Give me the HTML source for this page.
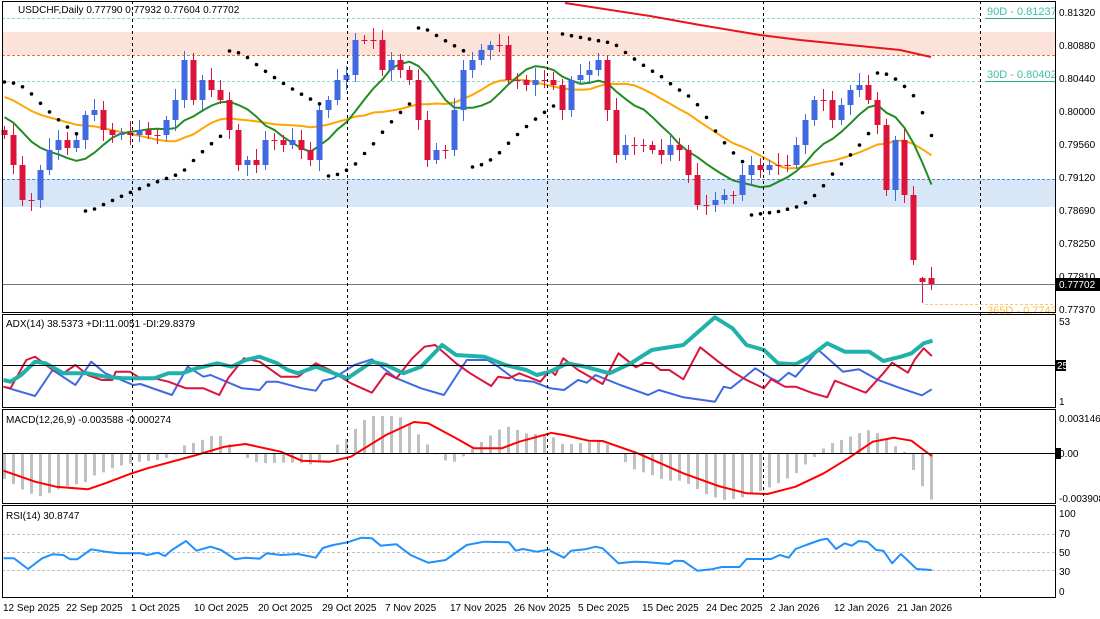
<!DOCTYPE html>
<html><head><meta charset="utf-8"><style>
body{margin:0;width:1100px;height:619px;background:#fff;overflow:hidden;font-family:"Liberation Sans",sans-serif}
svg{position:absolute;left:0;top:0}
text{font-family:"Liberation Sans",sans-serif;font-size:10px;fill:#000}
</style></head><body>
<svg id="s" width="1100" height="619" xmlns="http://www.w3.org/2000/svg">
<rect x="2" y="32" width="1053" height="23" fill="#fbe3d9"/>
<line x1="2" y1="55.5" x2="1055" y2="55.5" stroke="#e8743b" stroke-dasharray="3,2"/>
<rect x="2" y="179" width="1053" height="28" fill="#d8e7f8"/>
<line x1="2" y1="179.5" x2="1055" y2="179.5" stroke="#4a8ad8" stroke-dasharray="3,2"/>
<line x1="2" y1="18.5" x2="980" y2="18.5" stroke="#8fd6c6" stroke-dasharray="3,2"/>
<line x1="985" y1="18.5" x2="1055" y2="18.5" stroke="#2aa88a"/>
<line x1="2" y1="81.5" x2="980" y2="81.5" stroke="#8fd6c6" stroke-dasharray="3,2"/>
<line x1="985" y1="81.5" x2="1055" y2="81.5" stroke="#2aa88a"/>
<line x1="925" y1="304.5" x2="1055" y2="304.5" stroke="#ffc96b" stroke-dasharray="3,2"/>
<line x1="2" y1="284.5" x2="1055" y2="284.5" stroke="#6a7a8a"/>
<text x="987" y="15" style="fill:#3dbfa5;font-size:11px">90D - 0.81237</text>
<text x="987" y="78" style="fill:#3dbfa5;font-size:11px">30D - 0.80402</text>
<text x="987" y="314" style="fill:#ffc14d;font-size:11px">365D - 0.7743</text>
<g id="g"></g>
<g id="frame" fill="none" stroke="#000">
<rect x="2.5" y="1.5" width="1053" height="311"/>
<rect x="2.5" y="314.5" width="1053" height="93"/>
<rect x="2.5" y="409.5" width="1053" height="94"/>
<rect x="2.5" y="505.5" width="1053" height="92"/>
</g>
<g stroke="#000" stroke-dasharray="3,3">
<line x1="132.5" y1="1" x2="132.5" y2="598"/><line x1="347.5" y1="1" x2="347.5" y2="598"/><line x1="547.5" y1="1" x2="547.5" y2="598"/><line x1="763.5" y1="1" x2="763.5" y2="598"/><line x1="980.5" y1="1" x2="980.5" y2="598"/>
</g>
<line x1="2" y1="365.5" x2="1055" y2="365.5" stroke="#000"/>
<line x1="2" y1="453.5" x2="1055" y2="453.5" stroke="#000"/>
<text x="18" y="13">USDCHF,Daily  0.77790 0.77932 0.77604 0.77702</text>
<text x="6" y="327">ADX(14) 38.5373 +DI:11.0051 -DI:29.8379</text>
<text x="6" y="423">MACD(12,26,9) -0.003588 -0.000274</text>
<text x="6" y="519">RSI(14) 30.8747</text>
<g>
<text x="1059" y="16">0.81320</text><text x="1059" y="49">0.80880</text><text x="1059" y="82">0.80440</text><text x="1059" y="115">0.80000</text><text x="1059" y="148">0.79560</text><text x="1059" y="181">0.79120</text><text x="1059" y="214">0.78690</text><text x="1059" y="247">0.78250</text><text x="1059" y="280">0.77810</text><text x="1059" y="313">0.77370</text>
<rect x="1056" y="278" width="44" height="13" fill="#000"/><text x="1059" y="288" style="fill:#fff">0.77702</text>
<text x="1059" y="325">53</text><rect x="1056" y="360" width="10" height="11" fill="#000"/><text x="1057" y="369" style="fill:#fff">25</text><text x="1059" y="405">1</text>
<text x="1059" y="422">0.003146</text><rect x="1056" y="448" width="5" height="11" fill="#000"/><text x="1059" y="457">0.00</text><text x="1059" y="502">-0.003908</text>
<text x="1059" y="517">100</text><text x="1059" y="537">70</text><text x="1059" y="556">50</text><text x="1059" y="575">30</text><text x="1059" y="595">0</text>
</g>
<g>
<text x="3" y="611">12 Sep 2025</text><text x="66" y="611">22 Sep 2025</text><text x="131" y="611">1 Oct 2025</text><text x="194" y="611">10 Oct 2025</text><text x="258" y="611">20 Oct 2025</text><text x="322" y="611">29 Oct 2025</text><text x="385" y="611">7 Nov 2025</text><text x="450" y="611">17 Nov 2025</text><text x="514" y="611">26 Nov 2025</text><text x="578" y="611">5 Dec 2025</text><text x="642" y="611">15 Dec 2025</text><text x="706" y="611">24 Dec 2025</text><text x="770" y="611">2 Jan 2026</text><text x="834" y="611">12 Jan 2026</text><text x="897" y="611">21 Jan 2026</text>
</g>
</svg>
<script>
(function(){
var NS="http://www.w3.org/2000/svg",G=document.getElementById('g');
function el(t,a){var e=document.createElementNS(NS,t);for(var k in a)e.setAttribute(k,a[k]);G.appendChild(e);return e;}
function pl(pts,c,w,ox){var s=pts.map(function(p){return (ox+p[0]/2.85).toFixed(1)+','+(310+p[1]/3).toFixed(1)}).join(' ');el('polyline',{points:s,fill:'none',stroke:c,'stroke-width':w,'stroke-linejoin':'round'});}
var C=[135,165,200,200,170,150,140,148,140,115,110,130,135,133,135,130,135,135,120,100,60,100,80,90,100,130,165,160,165,140,140,145,140,150,160,110,100,80,75,40,40,40,70,60,70,80,120,160,150,150,110,70,60,50,45,45,80,80,85,80,80,85,110,80,75,70,60,110,155,145,145,145,150,155,145,150,175,205,205,200,195,195,175,165,170,165,165,165,145,120,100,100,120,105,90,85,100,125,190,140,195,260,282,284];
var N=C.length,X=function(i){return 4.5+i*9;};
el('polyline',{points:'565,3 650,16 700,25 760,35 800,40 850,45 900,50 931,57',fill:'none',stroke:'#e8141e','stroke-width':2});
function ma(p,seed){var h=[];for(var k=0;k<p;k++)h.push(seed);var r=[];for(var i=0;i<N;i++){h.push(C[i]);h.shift();r.push(h.reduce(function(a,b){return a+b})/p);}return r;}
var o=ma(20,95),g=ma(9,115);
el('polyline',{points:o.map(function(v,i){return X(i)+','+v.toFixed(1)}).join(' '),fill:'none',stroke:'#ffa500','stroke-width':2});
el('polyline',{points:g.map(function(v,i){return X(i)+','+v.toFixed(1)}).join(' '),fill:'none',stroke:'#228b22','stroke-width':2});
var H=[],L=[];
for(var i=0;i<N;i++){var op=i?C[i-1]:130,cl=C[i];var tp=Math.min(op,cl),bt=Math.max(op,cl);
 var hi=tp-4-((i*7)%9),lo=bt+4+((i*5)%8);if(i==N-1){hi=267;lo=290;op=278;}
 if(i==N-2){op=278;hi=277;lo=303;}
 H.push(hi);L.push(lo);
 var up=cl<op,col=up?'#4169e1':'#dc143c';
 el('line',{x1:X(i),y1:hi,x2:X(i),y2:lo,stroke:col,'stroke-width':1});
 el('rect',{x:X(i)-3,y:Math.min(op,cl),width:6,height:Math.max(1,Math.abs(cl-op)),fill:col});}
var dn=true,ep=L[0],sar=82,af=0.02;
for(var i=0;i<N;i++){
 el('circle',{cx:X(i),cy:sar.toFixed(1),r:1.8,fill:'#000'});
 if(dn){ if(L[i]>ep){ep=L[i];af=Math.min(0.2,af+0.02);} sar=sar+af*(ep-sar); if(i+1<N&&H[i+1]<sar){dn=false;sar=ep;ep=H[i+1];af=0.02;} }
 else { if(H[i]<ep){ep=H[i];af=Math.min(0.2,af+0.02);} sar=sar+af*(ep-sar); if(i+1<N&&L[i+1]>sar){dn=true;sar=ep;ep=L[i+1];af=0.02;} }
}
var hk=[[10,505],[80,548],[120,560],[150,545],[200,525],[240,520],[260,500],[300,485],[330,470],[400,455],[450,450],[490,440],[510,428],[530,400],[560,398],[600,378],[625,375],[650,398],[670,420],[690,437],[740,460],[800,458],[850,458],[900,465],[920,450],[960,405],[990,385],[1010,360],[1050,318],[1080,318],[1130,318],[1150,325],[1190,370],[1220,405],[1240,430],[1265,450],[1290,457],[1310,450],[1330,430],[1380,390],[1420,360],[1450,350],[1500,370],[1568,375]];
var hr=[[0,375],[15,385],[40,405],[80,400],[130,395],[150,395],[175,410],[200,443],[240,478],[290,495],[330,512],[380,512],[400,525],[450,555],[495,570],[540,565],[580,550],[610,540],[660,515],[700,492],[720,470],[745,450],[770,425],[790,405],[830,390],[880,370],[905,360],[950,375],[975,408],[1000,410],[1020,440],[1040,490],[1065,535],[1088,570]];
var hp=hk.map(function(p){return [p[0]/2.85,310+p[1]/3]}).concat(hr.map(function(p){return [550+p[0]/2.85,310+p[1]/3]}));
function interp(x){for(var k=1;k<hp.length;k++){if(hp[k][0]>=x){var a=hp[k-1],b=hp[k];return a[1]+(b[1]-a[1])*(x-a[0])/((b[0]-a[0])||1);}}return hp[hp.length-1][1];}
for(var i=0;i<N;i++){var y=interp(X(i));el('rect',{x:X(i)-1.5,y:Math.min(y,453),width:3,height:Math.abs(y-453),fill:'#c0c0c0'});}
pl([[10,482],[100,515],[160,530],[250,538],[300,520],[370,492],[420,475],[560,435],[640,410],[700,402],[800,425],[860,452],[940,455],[1000,440],[1100,375],[1180,336],[1220,340],[1300,385],[1350,415],[1430,415],[1480,395],[1568,370]],'#ff0000',2,0);
pl([[0,368],[40,375],[110,392],[150,393],[250,430],[380,490],[480,528],[560,550],[620,552],[700,530],[780,490],[850,445],[920,395],[980,383],[1030,392],[1065,420],[1088,438]],'#ff0000',2,550);
[534.5,552.5,570.5].forEach(function(y){el('line',{x1:2,y1:y,x2:1055,y2:y,stroke:'#c0c0c0','stroke-dasharray':'3,2'});});
pl([[10,745],[40,745],[80,777],[120,745],[150,733],[180,735],[200,748],[220,748],[260,718],[300,725],[340,730],[400,730],[420,735],[450,728],[470,738],[490,720],[530,693],[560,722],[600,710],[630,720],[670,748],[700,743],[740,746],[760,730],[800,735],[850,732],[900,743],[920,714],[950,705],[990,697],[1030,683],[1060,685],[1085,707],[1130,703],[1170,735],[1220,758],[1270,750],[1330,705],[1380,695],[1450,697],[1470,722],[1490,717],[1530,725],[1568,718]],'#1e90ff',2,0);
pl([[0,722],[40,743],[60,722],[100,718],[130,710],[150,715],[195,760],[240,755],[270,756],[340,762],[355,752],[380,753],[420,782],[460,778],[490,771],[540,771],[560,747],[630,747],[655,735],[680,743],[700,717],[730,705],[770,690],[790,686],[815,717],[840,700],[860,707],[880,693],[905,696],[930,720],[950,722],[975,760],[1000,732],[1045,777],[1088,780]],'#1e90ff',2,550);
pl([[10,230],[100,258],[150,180],[215,225],[260,155],[300,190],[380,225],[400,222],[490,255],[535,170],[580,200],[600,195],[690,235],[740,240],[760,215],[790,215],[860,235],[900,242],[920,212],[950,205],[1010,165],[1060,148],[1130,205],[1200,235],[1265,255],[1330,150],[1390,150],[1420,170],[1470,210],[1520,215],[1568,235]],'#4169e1',2,0);
pl([[0,235],[40,240],[80,210],[105,218],[130,195],[200,225],[280,255],[310,240],[380,262],[470,275],[495,230],[515,235],[545,210],[585,175],[630,205],[650,215],[680,188],[700,200],[765,120],[835,185],[880,178],[935,210],[1000,235],[1060,256],[1088,238]],'#4169e1',2,550);
pl([[10,230],[30,235],[75,150],[100,140],[150,180],[180,190],[215,165],[250,195],[290,210],[320,210],[330,185],[370,185],[400,205],[440,205],[480,215],[530,235],[580,235],[625,255],[650,205],[695,145],[740,155],[800,200],[850,200],[900,160],[940,180],[1000,220],[1060,248],[1100,190],[1130,205],[1175,145],[1210,110],[1240,105],[1300,160],[1340,190],[1400,228],[1420,200],[1450,205],[1480,190],[1540,215],[1568,180]],'#dc143c',2,0);
pl([[0,180],[15,195],[38,145],[80,180],[150,222],[195,130],[245,172],[270,158],[290,160],[315,180],[340,180],[380,208],[428,112],[480,155],[520,185],[560,210],[610,235],[630,208],[670,230],[700,230],[750,250],[790,262],[812,212],[900,248],[950,190],[975,158],[1020,188],[1040,148],[1065,115],[1088,138]],'#dc143c',2,550);
pl([[10,210],[30,215],[60,195],[100,155],[130,160],[180,190],[250,190],[300,200],[350,205],[440,205],[480,190],[520,190],[560,175],[620,160],[660,170],[700,150],[740,140],[790,160],[820,180],[850,190],[900,170],[940,185],[990,205],[1060,155],[1100,165],[1150,190],[1200,170],[1260,105],[1300,135],[1380,140],[1440,165],[1500,180],[1530,195],[1568,185]],'#20b2aa',4,0);
pl([[0,185],[50,160],[100,170],[170,190],[230,160],[290,120],[380,105],[470,22],[520,55],[560,105],[610,120],[650,160],[700,163],[740,140],[790,100],[840,125],[910,125],[950,153],[1000,140],[1030,130],[1065,100],[1090,92]],'#20b2aa',4,550);
})();
</script>
</body></html>
